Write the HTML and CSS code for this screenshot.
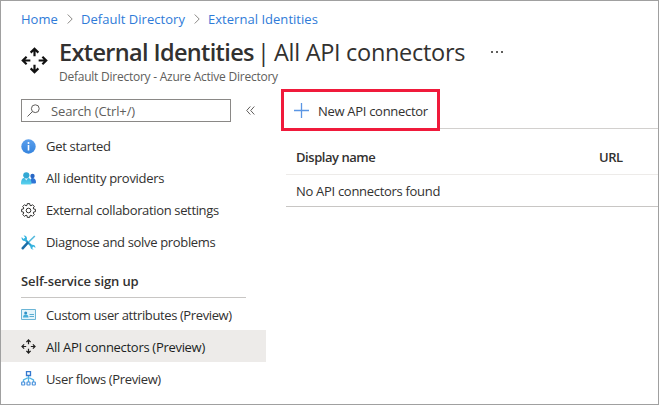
FILE: index.html
```html
<!DOCTYPE html>
<html lang="en">
<head>
<meta charset="utf-8">
<title>External Identities | All API connectors</title>
<link rel="stylesheet" href="styles.css">
</head>
<body>
<svg class="defs" aria-hidden="true">
  <symbol id="arrows" viewBox="0 0 26 26">
    <g fill="none" stroke="currentColor" stroke-width="2.100">
      <path d="M13 9V1.500M9.300 5.400 13 1.700l3.700 3.700"/><path d="M13 17v7.500M9.300 20.600l3.700 3.700 3.700-3.700"/>
      <path d="M9 13H1.500M5.400 9.300 1.700 13l3.700 3.700"/><path d="M17 13h7.500M20.600 9.300l3.700 3.700-3.700 3.700"/>
    </g>
  </symbol>
  <symbol id="chevron" viewBox="0 0 6 10"><path d="M.7.5 5.200 5 .7 9.500" fill="none" stroke="#8a8886"/></symbol>
</svg>
<div class="window">
  <nav class="crumbs">
    <a class="c1">Home</a><svg class="chev"><use href="#chevron"/></svg>
    <a class="c2">Default Directory</a><svg class="chev"><use href="#chevron"/></svg>
    <a class="c3">External Identities</a>
  </nav>
  <header class="header">
    <svg class="logo"><use href="#arrows"/></svg>
    <div>
      <h1><b>External Identities</b><span class="bar">|</span><span class="page">All API connectors</span><span class="more"><i></i><i></i><i></i></span></h1>
      <p class="sub">Default Directory - Azure Active Directory</p>
    </div>
  </header>
  <div class="body">
    <aside class="side">
      <div class="searchrow">
        <div class="search">
          <svg width="13" height="13" viewBox="0 0 13 13" fill="none" stroke="#605e5c"><circle cx="8.300" cy="4.700" r="3.900"/><path d="M5.500 7.500.5 12.500"/></svg>
          <span>Search (Ctrl+/)</span>
        </div>
        <svg class="collapse" width="9" height="9" viewBox="0 0 9 9" fill="none" stroke="#605e5c"><path d="M4.300.5.700 4.500l3.600 4M8.300.5 4.700 4.500l3.600 4"/></svg>
      </div>
      <ul class="menu">
        <li><svg viewBox="0 0 15 15"><defs><linearGradient id="g1" x2="0" y2="1"><stop stop-color="#5b9fec"/><stop offset="1" stop-color="#3584de"/></linearGradient></defs><circle cx="7.500" cy="7.500" r="7.200" fill="url(#g1)"/><circle cx="7.500" cy="4" r="1" fill="#fff"/><path d="M6.700 6h1.600v5.500H6.700z" fill="#fff"/></svg><span>Get started</span></li>
        <li><svg viewBox="0 0 15 15"><defs><linearGradient id="g2" x2="0" y2="1"><stop stop-color="#38b0dc"/><stop offset="1" stop-color="#5bd3ef"/></linearGradient></defs><path d="M9 12.500c0-4 .8-5.500 2.500-5.500S15 8.500 15 11c0 1-.5 1.500-1.500 1.500z" fill="#2f75d6"/><circle cx="11.500" cy="5" r="2.200" fill="#2867c5"/><path d="M0 12.500C0 8.500 1.500 6.500 5 6.500s5.500 2 5.500 6c0 .7-.4 1-1 1H1c-.6 0-1-.3-1-1z" fill="url(#g2)"/><path d="m3 6.500 2.300 3 2.200-3z" fill="#e5f7fc"/><circle cx="5.300" cy="4.300" r="3.100" fill="#32a8d4"/></svg><span>All identity providers</span></li>
        <li><svg viewBox="0 0 15 15" fill="none" stroke="#323130"><path d="M6.300.6h2.400l.3 1.800 1 .4 1.500-1.100 1.800 1.800L12.200 5l.4 1 1.800.3v2.400l-1.800.3-.4 1 1.100 1.500-1.800 1.800-1.500-1.100-1 .4-.3 1.800H6.300L6 12.600l-1-.4-1.500 1.100-1.800-1.800L2.800 10l-.4-1L.6 8.700V6.300L2.400 6l.4-1-1.100-1.500 1.800-1.800L5 2.800l1-.4z" stroke-linejoin="round"/><circle cx="7.500" cy="7.500" r="2.300"/></svg><span class="collab">External collaboration settings</span></li>
        <li><svg viewBox="0 0 15 15" fill="none"><path d="m3.500 4 8 8" stroke="#2ca4d5" stroke-width="2.200"/><path d="M.6 2c-.3 3 1.400 4.300 4 3.800L6 4.300C6.300 1.800 4.800.4 2.600.6l1.600 1.800-1.600 1.500zM14.400 13c.3-2.500-1.500-3.700-4-3.200l-1 1c-.3 2.500.9 3.900 3.200 3.700L11 12.900l1.500-1.400z" fill="#38b5e0"/><path d="m13.800 1-7.300 7.200" stroke="#54b9dd" stroke-width="1.600"/><path d="m6.500 8-4.700 5.200" stroke="#1b6da8" stroke-width="2.600" stroke-linecap="round"/></svg><span class="diag">Diagnose and solve problems</span></li>
      </ul>
      <h2>Self-service sign up</h2>
      <ul class="menu lower">
        <li><svg viewBox="0 0 15 15"><path d="M.5 2.500h14v10H.5z" fill="#e3f4fb" stroke="#6bb5d6"/><circle cx="4.700" cy="6" r="1.500" fill="#2d91c5"/><path d="M2 10.500c0-2 1-3 2.700-3s2.800 1 2.800 3z" fill="#45add9"/><path d="M8.500 7.500H13M8.500 9.500H13" stroke="#5badd2"/></svg><span class="attrs">Custom user attributes (Preview)</span></li>
        <li class="on"><svg viewBox="0 0 15 15"><use href="#arrows" width="15" height="15"/></svg><span>All API connectors (Preview)</span></li>
        <li><svg viewBox="0 0 15 15" fill="none"><path d="M7.500 5v6M2.500 11V9l5-2.500 5 2.500v2" stroke="#52b4e4" stroke-width="1.300"/><path d="M5.500.7h4v3.800h-4z" fill="#fff" stroke="#3479cf" stroke-width="1.300"/><g fill="#fff" stroke="#4a91dc" stroke-width="1.200"><rect x=".7" y="11" width="3" height="3" rx=".5"/><rect x="6" y="11" width="3" height="3" rx=".5"/><rect x="11.300" y="11" width="3" height="3" rx=".5"/></g></svg><span class="flows">User flows (Preview)</span></li>
      </ul>
    </aside>
    <main class="main">
      <div class="toolbar">
        <button class="new"><svg width="15" height="15" viewBox="0 0 15 15"><path d="M7.500 0v15M0 7.500h15" stroke="#5b96e4" stroke-width="1.300"/></svg><span>New API connector</span></button>
        <div class="rule"></div>
      </div>
      <div class="table">
        <div class="row head"><span class="name">Display name</span><span>URL</span></div>
        <div class="row"><span>No API connectors found</span></div>
      </div>
    </main>
  </div>
</div>
</body>
</html>
```
FILE: styles.css
```css
* { box-sizing: border-box; margin: 0; padding: 0; }
body { font: 13px/18px "Open Sans", "Noto Sans", sans-serif; color: #323130; background: #fff; letter-spacing: -0.3px; }
.defs { position: absolute; width: 0; height: 0; }
.window { width: 659px; height: 405px; border: 1px solid #a0a0a0; overflow: hidden; white-space: nowrap; }
svg { flex: none; display: block; }
.crumbs { display: flex; align-items: center; height: 18px; margin: 9px 0 0 20px; color: #2f7bd8; letter-spacing: 0.03px; }
.chev { width: 6px; height: 10px; margin: 0 8px; }
.c1 { width: 38px; }
.c2 { width: 105px; }
.header { display: flex; height: 61px; padding: 10px 0 0 20px; }
.logo { width: 27px; height: 27px; margin: 9px 11px 0 0; color: #111; }
h1 { display: flex; align-items: center; height: 28px; font-size: 23.5px; line-height: 28px; font-weight: 400; letter-spacing: -0.3px; }
h1 b { font-weight: 600; width: 202px; letter-spacing: -0.65px; }
.bar { width: 13px; margin-left: -4px; margin-right: 4px; }
.page { width: 193px; }
.more { display: flex; gap: 3px; margin-left: 24px; }
.more i { width: 2px; height: 2px; background: #605e5c; }
.sub { font-size: 12px; line-height: 16px; margin-top: 3px; color: #605e5c; letter-spacing: -0.24px; }
.body { display: flex; }
.side { width: 265px; padding-top: 10px; }
.searchrow { display: flex; align-items: center; height: 23px; padding-left: 20px; }
.search { display: flex; align-items: center; width: 210px; height: 23px; border: 1px solid #8a8886; padding-left: 5px; color: #605e5c; letter-spacing: -0.12px; }
.search span { margin-left: 11px; }
.collapse { margin-left: 15px; }
.menu { list-style: none; }
.searchrow + .menu { margin-top: 8px; }
.menu li { display: flex; align-items: center; height: 32px; padding-left: 20px; }
.menu svg { width: 15px; height: 15px; margin-right: 10px; }
.menu .on { background: #edebe9; color: #201f1e; }
.lower span { padding-top: 2px; }
.collab { letter-spacing: -0.35px; }
.diag { letter-spacing: -0.34px; }
.attrs { letter-spacing: -0.39px; }
.flows { letter-spacing: -0.36px; }
h2 { height: 40px; margin: 0 20px; padding-top: 8px; font-size: 13px; line-height: 30px; font-weight: 600; letter-spacing: -0.1px; border-bottom: 1px solid #c8c6c4; }
.main { flex: 1; min-width: 0; }
.toolbar { display: flex; align-items: flex-end; height: 42px; padding-left: 15px; }
.new { display: flex; align-items: center; width: 159px; height: 42px; border: 3px solid #f01a3b; background: #fff; padding-left: 10px; font: inherit; color: inherit; letter-spacing: inherit; }
.new span { margin-left: 9px; padding-top: 2px; }
.rule { flex: 1; height: 1px; background: #d2d0ce; margin-bottom: 2px; }
.table { margin-left: 20px; padding-top: 9px; }
.row { display: flex; align-items: center; height: 32px; padding-left: 10px; border-bottom: 1px solid #c8c6c4; }
.head { height: 35px; font-weight: 600; border-color: #edebe9; letter-spacing: -0.45px; }
.name { width: 303px; }
```
